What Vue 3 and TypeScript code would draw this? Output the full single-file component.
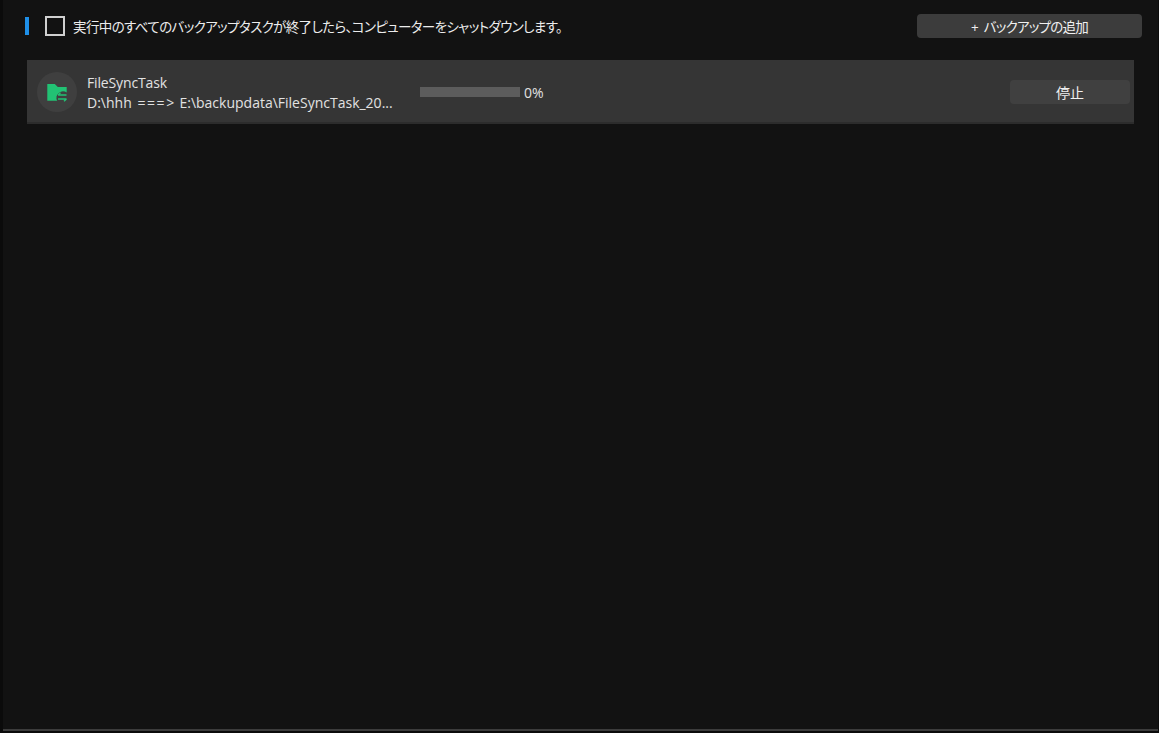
<template>
  <div class="frame">
    <div class="page">
      <div class="toolbar">
        <span class="accent"></span>
        <label class="shutdown">
          <span class="check" :class="{ on: shutdownAfter }" @click="shutdownAfter = !shutdownAfter"></span>
          <span class="shutdown-text">実行中のすべてのバックアップタスクが終了したら、コンピューターをシャットダウンします。</span>
        </label>
        <button class="add-btn">+ バックアップの追加</button>
      </div>

      <div class="task-list">
        <div v-for="task in tasks" :key="task.name" class="task">
          <div class="task-icon">
            <svg width="22" height="20" viewBox="0 0 22 20">
              <path d="M1.300 2h7.500l3 3h8.900v5.500a6.500 6.500 0 0 0-9.500 8.200H1.300z" fill="#22c274" />
              <path d="M12 13h8.500M14.500 10.800l-2.500 2.200M12 17h8.500M18 19.200l2.500-2.200" fill="none" stroke="#22c274" stroke-width="1.400" />
            </svg>
          </div>
          <div class="task-info">
            <div class="task-name">{{ task.name }}</div>
            <div class="task-path">{{ task.source }} <span class="arrow">===&gt;</span> {{ task.target }}</div>
          </div>
          <div class="progress">
            <div class="progress-track">
              <div class="progress-fill" :style="{ width: task.percent + '%' }"></div>
            </div>
            <span class="progress-label">{{ task.percent }}%</span>
          </div>
          <button class="stop-btn">停止</button>
        </div>
      </div>
    </div>
  </div>
</template>

<script setup lang="ts">
import { ref } from 'vue'

interface BackupTask {
  name: string
  source: string
  target: string
  percent: number
}

const shutdownAfter = ref(false)

const tasks = ref<BackupTask[]>([
  {
    name: 'FileSyncTask',
    source: 'D:\\hhh',
    target: 'E:\\backupdata\\FileSyncTask_20...',
    percent: 0,
  },
])
</script>

<style>
html,
body {
  margin: 0;
  background: #121212;
}
</style>

<style scoped>
.frame {
  width: 1159px;
  height: 733px;
  box-sizing: border-box;
  background: #0b0b0b;
  padding-bottom: 2px;
  font-family: "Open Sans", "Noto Sans CJK JP", sans-serif;
  color: #e6e6e6;
  overflow: hidden;
}

.page {
  height: 100%;
  box-sizing: border-box;
  margin-left: 3px;
  margin-right: 1px;
  background: #121212;
  border-bottom: 2px solid #3c3c3c;
  padding: 14px 16px 0 22px;
}

.toolbar {
  display: flex;
  align-items: center;
  height: 24px;
}

.accent {
  width: 4px;
  height: 18px;
  background: #1e8fe8;
  margin-right: 16px;
}

.shutdown {
  display: flex;
  align-items: center;
  flex: 1;
}

.check {
  width: 20px;
  height: 20px;
  box-sizing: border-box;
  border: 2px solid #d0d0d0;
  margin-right: 8px;
}

.shutdown-text {
  font-size: 13.5px;
  font-feature-settings: "palt";
  letter-spacing: -0.62px;
  color: #ececec;
}

.add-btn {
  width: 225px;
  height: 24px;
  border: none;
  border-radius: 4px;
  background: #3c3c3c;
  color: #f0f0f0;
  font: inherit;
  font-size: 13.5px;
  font-feature-settings: "palt";
  letter-spacing: -0.75px;
  word-spacing: 3px;
  padding: 0;
}

.task-list {
  margin-top: 22px;
  margin-left: 2px;
  width: 1107px;
}

.task {
  height: 64px;
  box-sizing: border-box;
  display: flex;
  align-items: center;
  background: #353535;
  border-bottom: 2px solid #2c2c2c;
  padding: 2px 4px 0 10px;
}

.task-icon {
  width: 40px;
  height: 40px;
  border-radius: 50%;
  background: #3f3f3f;
  display: flex;
  align-items: center;
  justify-content: center;
  flex-shrink: 0;
  margin-right: 10px;
}

.task-info {
  width: 333px;
  margin-top: 2px;
  font-size: 14px;
  line-height: 20px;
  color: #e2e2e2;
}

.task-name {
  letter-spacing: -0.15px;
}

.arrow {
  letter-spacing: 1.6px;
  margin-left: 2px;
}

.progress {
  display: flex;
  align-items: center;
  flex: 1;
}

.progress-track {
  width: 100px;
  height: 10px;
  background: #5c5c5c;
}

.progress-fill {
  height: 100%;
  background: #1e8fe8;
}

.progress-label {
  font-size: 14px;
  margin-left: 4px;
  color: #e2e2e2;
}

.stop-btn {
  width: 120px;
  height: 24px;
  border: none;
  border-radius: 4px;
  background: #404040;
  color: #f0f0f0;
  font: inherit;
  font-size: 14px;
  padding: 0;
}
</style>
